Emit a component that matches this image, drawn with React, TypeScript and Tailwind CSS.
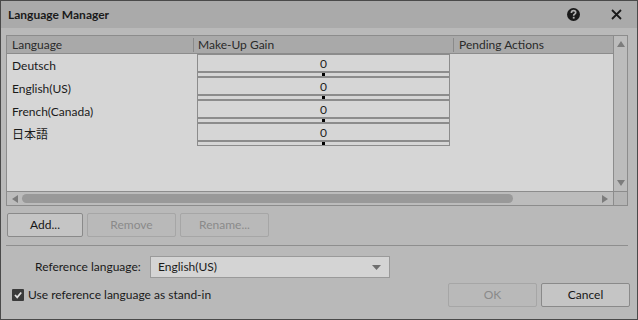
import React from 'react';

const languages = ['Deutsch', 'English(US)', 'French(Canada)', '日本語'];

const font = { fontFamily: 'Lato, "Noto Sans CJK JP", sans-serif' };

const GainCell: React.FC = () => (
    <div className="ml-[3px] w-[253px] h-[23px] flex flex-col border-x border-[#8c8c8c]">
        <div className="border-t border-[#8c8c8c] h-[17px] pt-[2px] flex items-center justify-center text-[12px] text-[#1e1e1e] leading-none">0</div>
        <div className="h-[2px] bg-[#8c8c8c]" />
        <div className="h-[3px] flex justify-center">
            <div className="w-[3px] h-[3px] bg-black" />
        </div>
        <div className="h-[1px] bg-[#8c8c8c]" />
    </div>
);

const Button: React.FC<{ label: string; width: string; disabled?: boolean }> = ({ label, width, disabled }) => (
    <div
        className={
            disabled
                ? `${width} h-[24px] shrink-0 rounded-[2px] border border-[#a6a6a6] bg-[#b9b9b9] text-[#8a8a8a] flex items-center justify-center text-[12px]`
                : `${width} h-[24px] shrink-0 rounded-[2px] border border-[#8a8a8a] bg-[#c5c5c5] text-[#161616] flex items-center justify-center text-[12px]`
        }
    >
        {label}
    </div>
);

export default function App() {
    return (
        <div style={font} className="w-[638px] h-[320px] border border-[#4a4a4a] bg-[#b9b9b9] flex flex-col text-[#1a1a1a] whitespace-nowrap">
            {/* title bar */}
            <div className="h-[27px] shrink-0 bg-[#aaaaaa] flex items-center pl-[7px] pr-[15px]">
                <span className="text-[12px] font-bold text-[#1a1a1a]">Language Manager</span>
                <div className="ml-auto flex items-center gap-[31px]">
                    <svg width="13" height="13" viewBox="0 0 13 13">
                        <circle cx="6.5" cy="6.5" r="6.5" fill="#1a1a1a" />
                        <path d="M4.4 5 C4.4 3.4 5.4 2.7 6.6 2.7 C7.9 2.7 8.7 3.5 8.7 4.5 C8.7 5.6 7.8 5.9 7.2 6.4 C6.8 6.7 6.7 7 6.7 7.7" stroke="#b0b0b0" strokeWidth="1.7" fill="none" />
                        <rect x="5.8" y="8.8" width="1.8" height="1.8" fill="#b0b0b0" />
                    </svg>
                    <svg width="11" height="11" viewBox="0 0 11 11">
                        <path d="M1 1 L10 10 M10 1 L1 10" stroke="#1a1a1a" strokeWidth="1.8" />
                    </svg>
                </div>
            </div>

            <div className="flex-1 flex flex-col pl-[5px]">
                {/* table frame */}
                <div className="mt-[7px] w-[622px] h-[171px] shrink-0 border border-[#8c8c8c] flex flex-col">
                    <div className="flex-1 flex min-h-0">
                        <div className="flex-1 flex flex-col bg-[#d6d6d6]">
                            <div className="h-[18px] shrink-0 bg-[#a9a9a9] border-b border-[#8c8c8c] flex items-center text-[12px] text-[#2a2a2a]">
                                <div className="w-[187px] pl-[5px] border-r border-[#8a8a8a] h-[14px] flex items-center">Language</div>
                                <div className="w-[260px] pl-[4px] border-r border-[#8a8a8a] h-[14px] flex items-center">Make-Up Gain</div>
                                <div className="pl-[5px] h-[14px] flex items-center">Pending Actions</div>
                            </div>
                            {languages.map(lang => (
                                <div key={lang} className="h-[23px] shrink-0 flex">
                                    <div className="w-[187px] pl-[5px] pt-[1px] flex items-center text-[12px] text-[#1a1a1a]">{lang}</div>
                                    <GainCell />
                                </div>
                            ))}
                        </div>
                        {/* vertical scrollbar */}
                        <div className="w-[14px] bg-[#bcbcbc] border-l border-[#8c8c8c] flex flex-col items-center justify-between py-[5px]">
                            <svg width="8" height="6" viewBox="0 0 8 6"><path d="M4 0 L8 6 L0 6 Z" fill="#7c7c7c" /></svg>
                            <svg width="8" height="6" viewBox="0 0 8 6"><path d="M0 0 L8 0 L4 6 Z" fill="#7c7c7c" /></svg>
                        </div>
                    </div>
                    {/* horizontal scrollbar */}
                    <div className="h-[14px] shrink-0 flex border-t border-[#8c8c8c]">
                        <div className="flex-1 bg-[#bcbcbc] flex items-center pl-[5px] pr-[5px]">
                            <svg width="6" height="8" viewBox="0 0 6 8"><path d="M0 4 L6 0 L6 8 Z" fill="#7c7c7c" /></svg>
                            <div className="ml-[4px] w-[491px] h-[9px] rounded-full bg-[#999999]" />
                            <div className="flex-1" />
                            <svg width="6" height="8" viewBox="0 0 6 8"><path d="M6 4 L0 0 L0 8 Z" fill="#7c7c7c" /></svg>
                        </div>
                        <div className="w-[14px] bg-[#b4b4b4] border-l border-[#8c8c8c]" />
                    </div>
                </div>

                {/* action buttons */}
                <div className="mt-[7px] ml-[1px] flex gap-[4px]">
                    <Button label="Add..." width="w-[76px]" />
                    <Button label="Remove" width="w-[89px]" disabled />
                    <Button label="Rename..." width="w-[89px]" disabled />
                </div>

                <div className="mt-[8px] w-[622px] h-[1px] shrink-0 bg-[#8e8e8e]" />

                {/* reference language */}
                <div className="mt-[10px] flex items-center">
                    <span className="ml-[29px] w-[115px] text-[12px] text-[#1a1a1a]">Reference language:</span>
                    <div className="w-[240px] h-[22px] bg-[#d4d4d4] border border-[#9a9a9a] flex items-center pl-[7px] pr-[8px] text-[12px]">
                        <span>English(US)</span>
                        <svg className="ml-auto" width="9" height="5" viewBox="0 0 9 5"><path d="M0 0 L9 0 L4.5 5 Z" fill="#6e6e6e" /></svg>
                    </div>
                </div>

                {/* bottom row */}
                <div className="mt-[5px] flex items-center pr-[7px]">
                    <div className="ml-[6px] w-[12px] h-[12px] bg-[#3a3a3a] rounded-[1px] flex items-center justify-center">
                        <svg width="10" height="10" viewBox="0 0 10 10"><path d="M2 5 L4.2 7.3 L8.2 2.5" stroke="#e0e0e0" strokeWidth="1.8" fill="none" /></svg>
                    </div>
                    <span className="ml-[4px] text-[12px] text-[#1a1a1a]">Use reference language as stand-in</span>
                    <div className="ml-auto flex gap-[4px]">
                        <Button label="OK" width="w-[89px]" disabled />
                        <Button label="Cancel" width="w-[89px]" />
                    </div>
                </div>
            </div>
        </div>
    );
}
